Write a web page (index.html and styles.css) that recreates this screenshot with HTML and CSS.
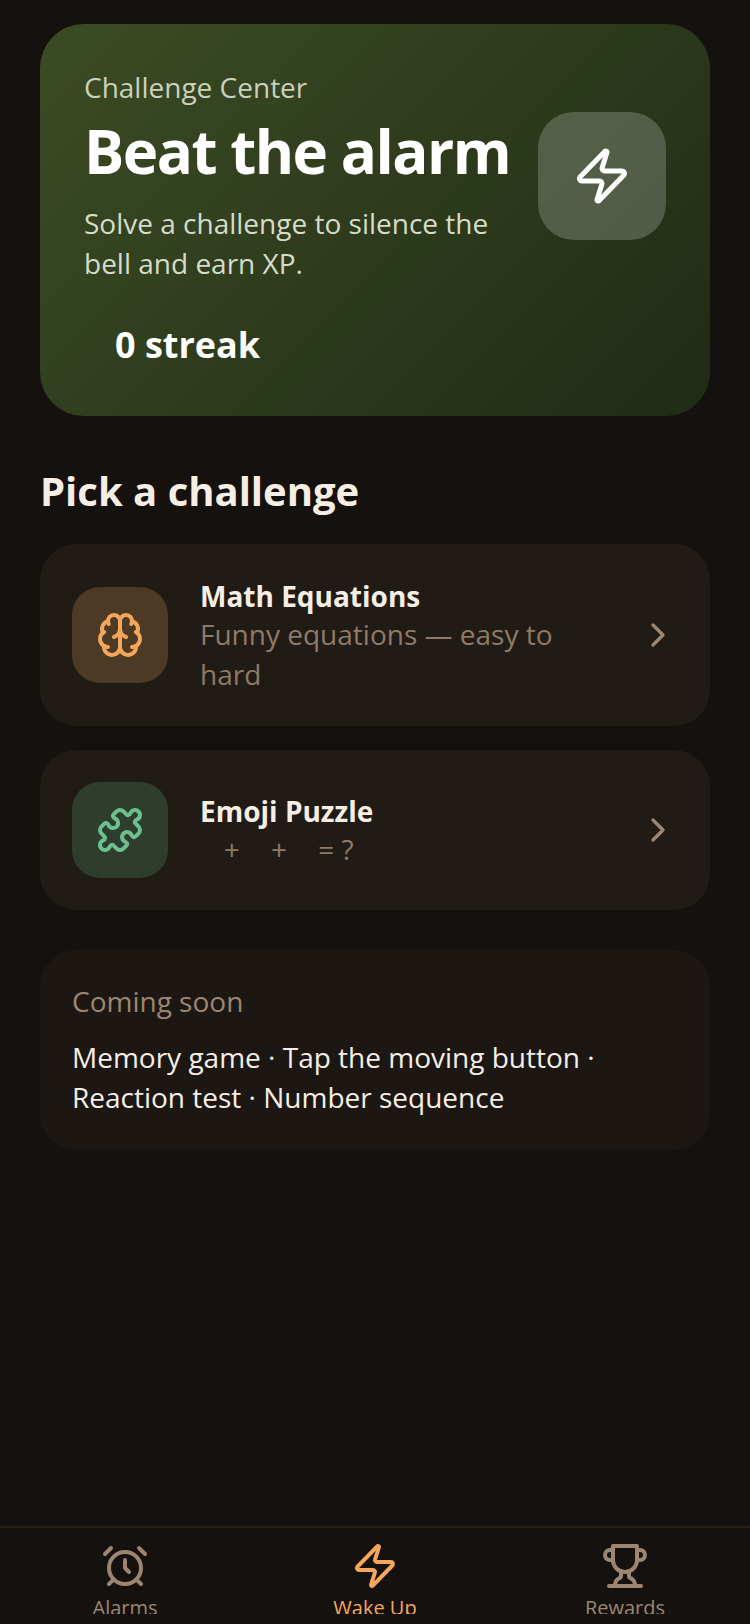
FILE: index.html
```html
<!DOCTYPE html>
<html lang="en">
<head>
  <meta charset="UTF-8" />
  <title>Challenge Center</title>
  <link rel="stylesheet" href="styles.css">
</head>
<body>
  <div class="app">
    <main class="content">

      <!-- Hero -->
      <section class="hero">
        <div class="hero-top">
          <div class="hero-text">
            <div class="hero-label">Challenge Center</div>
            <h1>Beat the alarm</h1>
            <p>Solve a challenge to silence the bell and earn XP.</p>
          </div>
          <div class="hero-icon">
            <svg class="icon-hero" viewBox="0 0 24 24" aria-hidden="true">
              <path d="M4 14a1 1 0 0 1-.78-1.63l9.9-10.2a.5.5 0 0 1 .86.46l-1.92 6.02A1 1 0 0 0 13 10h7a1 1 0 0 1 .78 1.63l-9.9 10.2a.5.5 0 0 1-.86-.46l1.92-6.02A1 1 0 0 0 11 14z"/>
            </svg>
          </div>
        </div>
        <div class="streak">0 streak</div>
      </section>

      <h2>Pick a challenge</h2>

      <!-- Challenges -->
      <div class="challenge">
        <div class="tile tile-orange">
          <svg class="icon-tile" viewBox="0 0 24 24" aria-hidden="true">
            <path d="M12 5a3 3 0 1 0-5.997.125 4 4 0 0 0-2.526 5.77 4 4 0 0 0 .556 6.588A4 4 0 1 0 12 18Z"/>
            <path d="M12 5a3 3 0 1 1 5.997.125 4 4 0 0 1 2.526 5.77 4 4 0 0 1-.556 6.588A4 4 0 1 1 12 18Z"/>
            <path d="M15 13a4.5 4.5 0 0 1-3-4 4.5 4.5 0 0 1-3 4"/>
            <path d="M17.599 6.5a3 3 0 0 0 .399-1.375"/>
            <path d="M6.003 5.125A3 3 0 0 0 6.401 6.5"/>
            <path d="M3.477 10.896a4 4 0 0 1 .585-.396"/>
            <path d="M19.938 10.5a4 4 0 0 1 .585.396"/>
            <path d="M6 18a4 4 0 0 1-1.967-.516"/>
            <path d="M19.967 17.484A4 4 0 0 1 18 18"/>
          </svg>
        </div>
        <div class="challenge-text">
          <div class="challenge-name">Math Equations</div>
          <div class="challenge-desc">Funny equations — easy to hard</div>
        </div>
        <svg class="chevron" viewBox="0 0 24 24" aria-hidden="true"><path d="m9 18 6-6-6-6"/></svg>
      </div>

      <div class="challenge">
        <div class="tile tile-green">
          <svg class="icon-tile" viewBox="0 0 24 24" aria-hidden="true">
            <path d="M19.439 7.85c-.049.322.059.648.289.878l1.568 1.568c.47.47.706 1.087.706 1.704s-.235 1.233-.706 1.704l-1.611 1.611a.98.98 0 0 1-.837.276c-.47-.07-.802-.48-.968-.925a2.501 2.501 0 1 0-3.214 3.214c.446.166.855.497.925.968a.979.979 0 0 1-.276.837l-1.61 1.61a2.404 2.404 0 0 1-1.705.707 2.402 2.402 0 0 1-1.704-.706l-1.568-1.568a1.026 1.026 0 0 0-.877-.29c-.493.074-.84.504-1.02.968a2.5 2.5 0 1 1-3.237-3.237c.464-.18.894-.527.967-1.02a1.026 1.026 0 0 0-.289-.877l-1.568-1.568A2.402 2.402 0 0 1 1.998 12c0-.617.236-1.234.706-1.704L4.23 8.77c.24-.24.581-.353.917-.303.515.077.877.528 1.073 1.01a2.5 2.5 0 1 0 3.259-3.259c-.482-.196-.933-.558-1.01-1.073-.05-.336.062-.676.303-.917l1.525-1.525A2.402 2.402 0 0 1 12 1.998c.617 0 1.234.236 1.704.706l1.568 1.568c.23.23.556.338.877.29.493-.074.84-.504 1.02-.968a2.5 2.5 0 1 1 3.237 3.237c-.464.18-.894.527-.967 1.02Z"/>
          </svg>
        </div>
        <div class="challenge-text">
          <div class="challenge-name">Emoji Puzzle</div>
          <div class="challenge-desc"><span class="emoji-gap"></span> + <span class="emoji-gap"></span> + <span class="emoji-gap"></span> = ?</div>
        </div>
        <svg class="chevron" viewBox="0 0 24 24" aria-hidden="true"><path d="m9 18 6-6-6-6"/></svg>
      </div>

      <!-- Coming soon -->
      <section class="soon">
        <div class="soon-label">Coming soon</div>
        <p>Memory game · Tap the moving button · Reaction test · Number sequence</p>
      </section>
    </main>

    <nav class="tabbar">
      <div class="tab">
        <svg class="icon-tab" viewBox="0 0 24 24" aria-hidden="true">
          <circle cx="12" cy="13" r="8"/>
          <path d="M12 9v4l2 2"/>
          <path d="M5 3 2 6"/>
          <path d="m22 6-3-3"/>
          <path d="M6.38 18.7 4 21"/>
          <path d="M17.64 18.67 20 21"/>
        </svg>
        <span>Alarms</span>
      </div>
      <div class="tab active">
        <svg class="icon-tab" viewBox="0 0 24 24" aria-hidden="true">
          <path d="M4 14a1 1 0 0 1-.78-1.63l9.9-10.2a.5.5 0 0 1 .86.46l-1.92 6.02A1 1 0 0 0 13 10h7a1 1 0 0 1 .78 1.63l-9.9 10.2a.5.5 0 0 1-.86-.46l1.92-6.02A1 1 0 0 0 11 14z"/>
        </svg>
        <span>Wake Up</span>
      </div>
      <div class="tab">
        <svg class="icon-tab" viewBox="0 0 24 24" aria-hidden="true">
          <path d="M6 9H4.5a2.5 2.5 0 0 1 0-5H6"/>
          <path d="M18 9h1.5a2.5 2.5 0 0 0 0-5H18"/>
          <path d="M4 22h16"/>
          <path d="M10 14.66V17c0 .55-.47.98-.97 1.21C7.85 18.75 7 20.24 7 22"/>
          <path d="M14 14.66V17c0 .55.47.98.97 1.21C16.15 18.75 17 20.24 17 22"/>
          <path d="M18 2H6v7a6 6 0 0 0 12 0V2Z"/>
        </svg>
        <span>Rewards</span>
      </div>
    </nav>
  </div>
</body>
</html>
```

FILE: styles.css
```css
/* Reset & base */
html, body {
  margin: 0;
  padding: 0;
  height: 100%;
  background: #15110e;
  font-family: "Open Sans", "Noto Sans", sans-serif;
  color: #f6eee4;
}

.app {
  height: 100%;
  display: flex;
  flex-direction: column;
  overflow: hidden;
}

.content {
  flex: 1;
  padding: 24px 40px 0;
  display: flex;
  flex-direction: column;
}

svg {
  fill: none;
  stroke: currentColor;
  stroke-linecap: round;
  stroke-linejoin: round;
  stroke-width: 2;
  display: block;
}

/* Hero */
.hero {
  height: 392px;
  box-sizing: border-box;
  padding: 44px 44px 0;
  border-radius: 44px;
  background: linear-gradient(135deg, #3c4c24 0%, #1f2b15 100%);
  color: #fff;
}

.hero-top {
  display: flex;
  align-items: center;
  gap: 28px;
}

.hero-text {
  flex: 1;
  min-width: 0;
}

.hero-label {
  font-size: 28px;
  line-height: 38px;
  color: #c9d1bb;
}

h1 {
  margin: 8px 0 15px;
  font-size: 60px;
  line-height: 74px;
  font-weight: 700;
  letter-spacing: -1.5px;
  white-space: nowrap;
}

.hero-text p {
  margin: 0;
  font-size: 28px;
  line-height: 40px;
  color: #d6dcca;
}

.hero-icon {
  width: 128px;
  height: 128px;
  flex-shrink: 0;
  border-radius: 36px;
  background: rgba(255, 255, 255, 0.2);
  display: flex;
  align-items: center;
  justify-content: center;
}

.icon-hero {
  width: 60px;
  height: 60px;
}

.streak {
  margin-top: 38px;
  padding-left: 31px;
  font-size: 36px;
  line-height: 48px;
  font-weight: 700;
}

/* Section title */
h2 {
  margin: 50px 0 28px;
  font-size: 40px;
  line-height: 50px;
  font-weight: 700;
  color: #f6eee4;
}

/* Challenge rows */
.challenge {
  display: flex;
  align-items: center;
  gap: 32px;
  padding: 32px;
  margin-bottom: 24px;
  border-radius: 36px;
  background: #211b16;
}

.tile {
  width: 96px;
  height: 96px;
  flex-shrink: 0;
  border-radius: 28px;
  display: flex;
  align-items: center;
  justify-content: center;
}

.tile-orange {
  background: #4d3a24;
  color: #f4a65c;
}

.tile-green {
  background: #2f3d2c;
  color: #6cc08e;
}

.icon-tile {
  width: 48px;
  height: 48px;
}

.challenge-text {
  flex: 1;
  padding-top: 2px;
}

.challenge-name {
  font-size: 28px;
  line-height: 36px;
  font-weight: 700;
}

.challenge-desc {
  font-size: 28px;
  line-height: 40px;
  color: #8f7a67;
}

.emoji-gap {
  display: inline-block;
  width: 16.6px;
}

.chevron {
  width: 40px;
  height: 40px;
  flex-shrink: 0;
  color: #9c8672;
}

/* Coming soon */
.soon {
  margin-top: 16px;
  padding: 32px 32px 33px;
  border-radius: 36px;
  background: #1c1713;
}

.soon-label {
  font-size: 28px;
  line-height: 39px;
  color: #9c8672;
}

.soon p {
  margin: 16px 0 0;
  font-size: 28px;
  line-height: 40px;
}

/* Bottom tabs */
.tabbar {
  height: 98px;
  box-sizing: border-box;
  flex-shrink: 0;
  border-top: 2px solid #2a211a;
  padding: 14px 0 10px;
  display: flex;
  overflow: hidden;
}

.tab {
  flex: 1;
  display: flex;
  flex-direction: column;
  align-items: center;
  gap: 4px;
  overflow: hidden;
  font-size: 20px;
  line-height: 28px;
  color: #9c8672;
}

.tab.active {
  color: #f4a65c;
}

.icon-tab {
  width: 48px;
  height: 48px;
  flex-shrink: 0;
}
```
